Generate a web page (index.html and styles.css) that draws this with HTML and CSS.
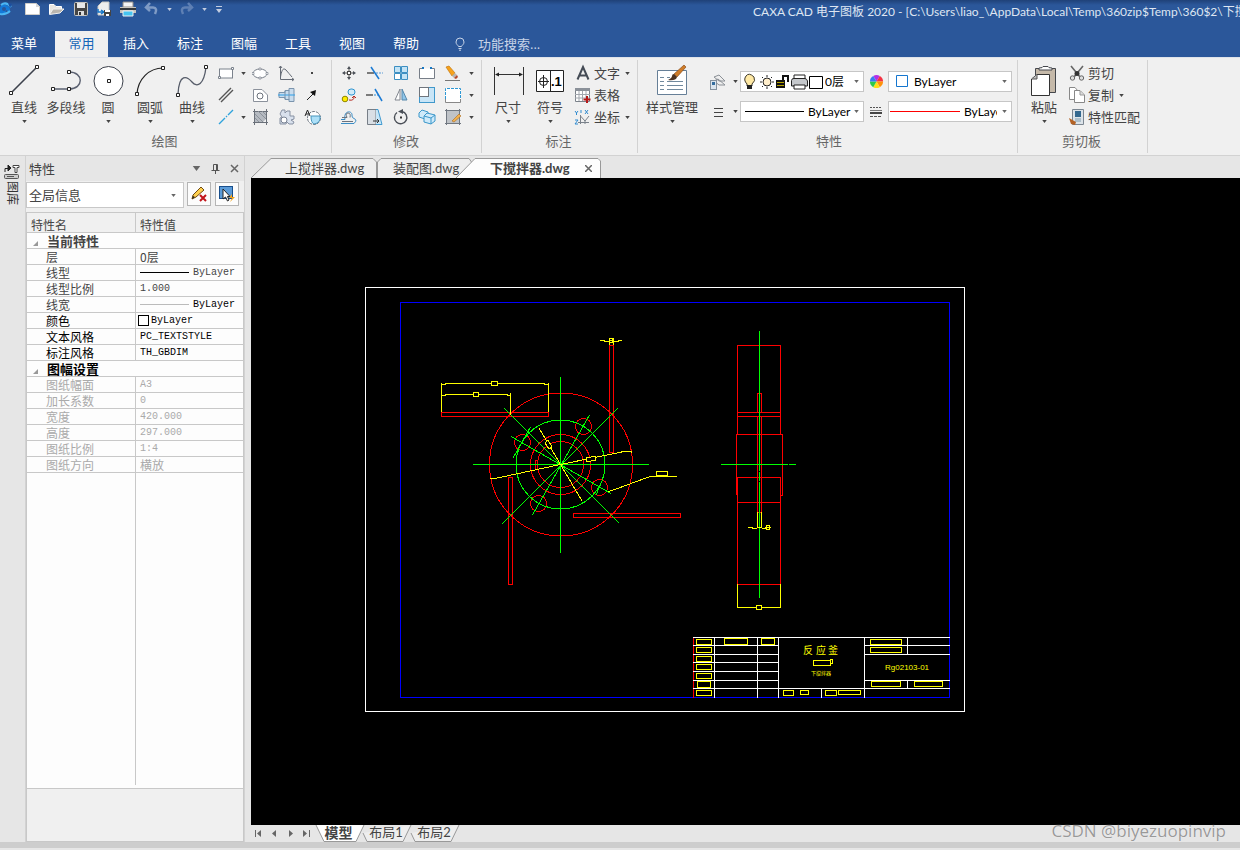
FILE: index.html
```html
<!DOCTYPE html>
<html lang="zh-CN">
<head>
<meta charset="utf-8">
<title>CAXA CAD 电子图板 2020</title>
<link rel="stylesheet" href="styles.css">
</head>
<body>
<svg class="defs" aria-hidden="true">
  <symbol id="caret" viewBox="0 0 6 4"><path d="M0 0H6L3 4Z"/></symbol>
</svg>

<header class="top">
  <div class="titlebar">
    <div class="quick">
      <svg class="logo" width="14" height="18" viewBox="0 0 14 18"><path d="M0 8Q1 3 6 5T10 12L6 10 5 14H0" fill="#1479d8"/><path d="M1 5Q6 1 11 7M0 14Q6 15 10 11" stroke="#4bb6f4" fill="none" stroke-width="2"/><path d="M8 3L12 4 10 8Z" fill="#1b4fa0"/><circle cx="4" cy="9" r="2" fill="#2b579a"/></svg>
      <button aria-label="新建"><svg width="18" height="14" viewBox="0 0 18 14"><path d="M2.500 1.500H13L16.500 4.500V12.500H2.500Z" fill="#fff" stroke="#d0cdc8"/><path d="M13 1V5H17" fill="#d8d8d8"/></svg></button>
      <button aria-label="打开"><svg width="18" height="14" viewBox="0 0 18 14"><path d="M1.500 12V2.500H6L8 4.500H13.500V7" fill="#e9e6e0" stroke="#fff"/><path d="M1.500 12.500L5 7H16L12 11Z" fill="#b9b5ae" stroke="#f1f1f1"/></svg></button>
      <button aria-label="保存"><svg width="16" height="14" viewBox="0 0 16 14"><rect x="1.500" y=".5" width="13" height="13" rx="1" fill="#454545" stroke="#c9c7c2"/><path d="M4 1H12V6H4Z" fill="#e8e8e8"/><path d="M5 9H11V13H5Z" fill="#ddd"/><path d="M6 10H8V13H6Z" fill="#333"/></svg></button>
      <button aria-label="另存为"><svg width="16" height="16" viewBox="0 0 16 16"><path d="M2 5L6 1H13V14H2Z" fill="#eee" stroke="#c9c7c2"/><path d="M2 8V11H7M5 9L8 11 5 13" stroke="#1676c8" fill="none" stroke-width="1.500"/><rect x="8" y="9" width="7" height="6" fill="#444"/><path d="M9 9H14V11H9ZM10 13H13V15H10Z" fill="#fff"/></svg></button>
      <button aria-label="打印"><svg width="18" height="16" viewBox="0 0 18 16"><path d="M4 1H14V6H4Z" fill="#f5f5f5" stroke="#8f8b86"/><path d="M1 6H17V12H1Z" fill="#c9c5bd"/><path d="M1 7H17V9H1Z" fill="#34383c"/><path d="M4 10H14V15H4Z" fill="#46c5f1" stroke="#eee"/></svg></button>
      <button class="dim" aria-label="撤销"><svg width="16" height="14" viewBox="0 0 16 14"><path d="M2 5.500H9Q14 6 11 12M6 1L2 5.500 6 9" fill="none" stroke="#7f9bc5" stroke-width="2.500"/></svg></button>
      <svg class="light" width="5" height="3"><use href="#caret"/></svg>
      <button class="dim" aria-label="重做"><svg width="16" height="14" viewBox="0 0 16 14"><path d="M13 5.500H6Q1 6 4 12M9 1L13 5.500 9 9" fill="none" stroke="#5f80b4" stroke-width="2.500"/></svg></button>
      <svg class="light" width="5" height="3"><use href="#caret"/></svg>
      <svg class="light more" width="6" height="9" viewBox="0 0 6 9"><path d="M0 1H6V2H0ZM0 4H6L3 8Z"/></svg>
    </div>
    <div class="title">CAXA CAD 电子图板 2020 - [C:\Users\liao_\AppData\Local\Temp\360zip$Temp\360$2\下搅拌器.dwg]</div>
  </div>
  <nav class="menu">
    <button class="file">菜单</button>
    <button class="on">常用</button>
    <button>插入</button>
    <button>标注</button>
    <button>图幅</button>
    <button>工具</button>
    <button>视图</button>
    <button>帮助</button>
    <label class="search">
      <svg width="12" height="14" viewBox="0 0 12 14"><path d="M4.500 9.500C4 8 2 7.500 2 5A4 4 0 0 1 10 5C10 7.500 8 8 7.500 9.500ZM4.500 11.500H7.500M5 13.200H7" fill="none" stroke="#c8d4e8"/></svg>
      <input type="text" placeholder="功能搜索..." aria-label="功能搜索">
    </label>
  </nav>
</header>

<section class="ribbon">
  <div class="group">
    <div class="tools">
      <button class="big"><svg class="ico" width="36" height="36" viewBox="0 0 36 36"><path d="M5 31L31 5" stroke="#3c414b" stroke-width="1.600"/><g class="node"><path d="M3.500 29.500h3v3h-3zM29.500 3.500h3v3h-3z"/></g></svg><span>直线</span><svg class="car"><use href="#caret"/></svg></button>
      <button class="big"><svg class="ico" width="36" height="36" viewBox="0 0 36 36"><path d="M5 27H21M21 10C36 10 36 27 21 27" fill="none" stroke="#5a6070" stroke-width="1.400"/><g class="node"><path d="M3.500 25.500h3v3h-3zM19.500 25.500h3v3h-3zM19.500 8.500h3v3h-3z"/></g></svg><span>多段线</span></button>
      <button class="big"><svg class="ico" width="36" height="36" viewBox="0 0 36 36"><circle cx="18.500" cy="19" r="14.500" fill="#fff" stroke="#3c414b"/><g class="node"><path d="M17.500 17.500h3v3h-3z"/></g></svg><span>圆</span><svg class="car"><use href="#caret"/></svg></button>
      <button class="big"><svg class="ico" width="36" height="36" viewBox="0 0 36 36"><path d="M5 32C6 17 17 6 31 6" fill="none" stroke="#222" stroke-width="1.200"/><g class="node"><path d="M3.500 30.500h3v3h-3zM29.500 4.500h3v3h-3z"/></g></svg><span>圆弧</span><svg class="car"><use href="#caret"/></svg></button>
      <button class="big"><svg class="ico" width="36" height="36" viewBox="0 0 36 36"><path d="M4 32C5 11 13 14 18 20S30 23 32 5" fill="none" stroke="#555b68" stroke-width="1.300"/><g class="node"><path d="M2.500 31.500h3v3h-3zM30.500 3.500h3v3h-3z"/></g></svg><span>曲线</span><svg class="car"><use href="#caret"/></svg></button>
      <div class="grid draw">
        <button aria-label="矩形"><svg class="sm" viewBox="0 0 18 18"><rect x="2.500" y="5" width="13" height="9" fill="#fff" stroke="#7b828c"/><path d="M1.500 12.500h2v2h-2zM14.500 3.500h2v2h-2z" fill="#fff" stroke="#7b828c"/></svg></button>
        <svg class="car"><use href="#caret"/></svg>
        <button aria-label="椭圆"><svg class="sm" viewBox="0 0 18 18"><ellipse cx="8" cy="9.500" rx="7" ry="4.500" fill="#fff" stroke="#7b828c"/><path d="M7 4h2v2H7zM7 13h2v2H7zM0 8.500h2v2H0zM14 8.500h2v2h-2z" fill="#fff" stroke="#7b828c" stroke-width=".7"/></svg></button>
        <button aria-label="公式曲线"><svg class="sm" viewBox="0 0 18 18"><path d="M2.500 2V15.500H16M1 4L2.500 2 4 4M14 14L16 15.500 14 17M2.500 13C4 4 6 4 8 6S12 11 14 13" fill="none" stroke="#666c76"/></svg></button>
        <button aria-label="点"><svg class="sm" viewBox="0 0 18 18"><rect x="7" y="8" width="2" height="2" fill="#444"/></svg></button>

        <button aria-label="平行线"><svg class="sm" viewBox="0 0 18 18"><path d="M2 14L14 2M4 16L16 4" stroke="#555" stroke-width="1.400"/></svg></button>
        <span></span>
        <button aria-label="轮廓"><svg class="sm" viewBox="0 0 18 18"><path d="M1.500 3.500H10L15.500 9V15.500H1.500Z" fill="#fff" stroke="#8b919b"/><circle cx="8" cy="10" r="3" fill="#fff" stroke="#6b717b"/></svg></button>
        <button aria-label="轴"><svg class="sm" viewBox="0 0 18 18"><path d="M1 6.500H7V4.500H11V2.500H16V15.500H11V13.500H7V11.500H1Z" fill="#c9dced" stroke="#7b94ad"/><path d="M0 9H17" stroke="#2d9fe8"/><path d="M7 5V13M11 4V14" stroke="#7b94ad"/></svg></button>
        <button aria-label="箭头"><svg class="sm" viewBox="0 0 18 18"><path d="M3 14L10 7" stroke="#222"/><path d="M12 4L11 10 6 6Z" fill="#111"/></svg></button>

        <button aria-label="中心线"><svg class="sm" viewBox="0 0 18 18"><path d="M2 16L8 10M9 9L10 8M11 7L16 2" stroke="#2fa3dc" stroke-width="1.400"/></svg></button>
        <svg class="car"><use href="#caret"/></svg>
        <button aria-label="剖面线"><svg class="sm" viewBox="0 0 18 18"><path d="M3 3H14V11L11 14H3Z" fill="#b5bac1"/><path d="M2.500 1V17M14.500 1V17M1 3.500H16M1 14.500H16" fill="none" stroke="#6a7079"/><path d="M3 6L11 14M3 10L7 14M6 3L14 11M10 3L14 7" stroke="#8c929a"/></svg></button>
        <button aria-label="齿轮"><svg class="sm" viewBox="0 0 18 18"><path d="M4 2H7V5L9 3H12V8H16V11L13 12 16 14 15 16H11L9 14 8 16H2V10L4 9 2 6Z" fill="#d9e1ed" stroke="#8791a3"/><circle cx="6" cy="12" r="3" fill="#fff" stroke="#7b8495"/></svg></button>
        <button aria-label="局部放大"><svg class="sm" viewBox="0 0 18 18"><circle cx="10" cy="10" r="6.500" fill="#fff" stroke="#68717c" stroke-dasharray="3 1"/><path d="M7 8H16Q17 15 10 16 7 15 7 8Z" fill="#ade0f8" stroke="#4996bd"/><path d="M1 8L3.500 2 6 8M2 6H5" fill="none" stroke="#222"/></svg></button>
      </div>
    </div>
    <div class="name">绘图</div>
  </div>

  <div class="group modify">
    <div class="tools">
      <div class="grid mod">
        <button aria-label="平移"><svg class="sm" viewBox="0 0 18 18"><path d="M9 4V7M9 11V14M4 9H7M11 9H14" stroke="#555"/><path d="M9 2L11 5H7ZM9 16L7 13H11ZM2 9L5 7V11ZM16 9L13 7V11Z" fill="#4b5058"/><rect x="7.500" y="7.500" width="3" height="3" fill="#fff" stroke="#444"/></svg></button>
        <button aria-label="裁剪"><svg class="sm" viewBox="0 0 18 18"><path d="M1 9H8" stroke="#555" stroke-width="1.500"/><path d="M10 9H17" stroke="#5b9bd5" stroke-dasharray="2 1"/><path d="M5 3L13 15" stroke="#1a7ad4" stroke-width="1.500"/></svg></button>
        <button aria-label="阵列"><svg class="sm" viewBox="0 0 18 18"><g fill="#c3e3f5" stroke="#3c8fc2"><path d="M2.500 2.500h6v6h-6zM9.500 2.500h6v6h-6zM9.500 9.500h6v6h-6z"/><path d="M2.500 9.500h6v6h-6z" fill="#fff"/></g></svg></button>
        <button aria-label="打断"><svg class="sm" viewBox="0 0 18 18"><path d="M5 4.500H1.500V14.500H16.500V4.500H13" fill="#fff" stroke="#777e88"/><path d="M4 3h2v2H4zM12 3h2v2h-2z" fill="#1778c5"/></svg></button>
        <button aria-label="删除"><svg class="sm" viewBox="0 0 18 18"><path d="M2 3L5 2 11 9 8 12Z" fill="#f7a21b" stroke="#c47811" stroke-width=".7"/><path d="M8 12L11 9 13 11 10 14Z" fill="#b9b5b0"/><path d="M10 14L13 11 14 13 12 15Z" fill="#b5482a"/><path d="M1 16.500H16" stroke="#777"/></svg></button>
        <svg class="car"><use href="#caret"/></svg>

        <button aria-label="复制"><svg class="sm" viewBox="0 0 18 18"><circle cx="5" cy="13" r="2.800" fill="#ffec00" stroke="#8f8500"/><rect x="8" y="3" width="7" height="6" rx="3" fill="#d1eaf8" stroke="#2e94cf"/><path d="M9 14Q14 15 14 11M12 12L14 10 16 12" fill="none" stroke="#b52a22"/></svg></button>
        <button aria-label="延伸"><svg class="sm" viewBox="0 0 18 18"><path d="M0 9H7" stroke="#555" stroke-width="1.500"/><path d="M8 9H13" stroke="#2c8ed5" stroke-dasharray="2 1"/><path d="M9 3L16 15" stroke="#1a7ad4" stroke-width="1.500"/></svg></button>
        <button aria-label="镜像"><svg class="sm" viewBox="0 0 18 18"><path d="M8 3V14H3Z" fill="#fff" stroke="#82878f"/><path d="M10 3V14H15Z" fill="#8fc6ea" stroke="#5687aa"/></svg></button>
        <button aria-label="缩放"><svg class="sm" viewBox="0 0 18 18"><rect x="1.500" y="1.500" width="15" height="15" fill="#c8e5f7" stroke="#4098cb"/><rect x="1.500" y="1.500" width="9" height="9" fill="#fff" stroke="#6f757d"/></svg></button>
        <button aria-label="拉伸"><svg class="sm" viewBox="0 0 18 18"><path d="M1.500 2.500H16.500V16.500H1.500Z" fill="#fff" stroke="#888"/><path d="M1.500 13V2.500H16.500V13" fill="none" stroke="#fff"/><path d="M1.500 13V2.500H16.500V13" fill="none" stroke="#2e98d4" stroke-dasharray="3 1"/></svg></button>
        <svg class="car"><use href="#caret"/></svg>

        <button aria-label="等距线"><svg class="sm" viewBox="0 0 18 18"><path d="M1 11.500H5C3 2 13 2 12 8 12 11 16 10 16 13T14 15.500H1" fill="none" stroke="#3a8dc6"/><path d="M2 13.500H13M2 9.500H7Q5 5 8 5T10 9.500" fill="none" stroke="#6c737d"/></svg></button>
        <button aria-label="拉长"><svg class="sm" viewBox="0 0 18 18"><path d="M1.500 1.500H10V16.500H1.500Z" fill="#d9dfe5" stroke="#777e87"/><path d="M10 1.500H12L16 16.500H10" fill="#c8e6f7" stroke="#429bd0"/><path d="M7 13H13M11 11L13 13 11 15" stroke="#333" fill="none"/></svg></button>
        <button aria-label="旋转"><svg class="sm" viewBox="0 0 18 18"><path d="M5 4.500A6.200 6.200 0 1 0 10 3.500" fill="none" stroke="#4a4f57" stroke-width="1.400"/><path d="M6 3.500L11 1V6Z" fill="#4a4f57"/><rect x="8" y="8.500" width="2" height="2" fill="#333"/></svg></button>
        <button aria-label="三维"><svg class="sm" viewBox="0 0 18 18"><g fill="#cfeafa" stroke="#3b97ca"><path d="M1 5L4 2 10 4V9L7 11 1 9Z"/><path d="M6 8L9 5 17 7V13L13 16 6 14Z"/><path d="M6 8L13 10V16M13 10L17 7" fill="none"/></g></svg></button>
        <button aria-label="编辑填充"><svg class="sm" viewBox="0 0 18 18"><path d="M3 3H15V15H3Z" fill="#bfc3c8"/><path d="M2.500 1V17M15.500 1V17M1 2.500H17M1 15.500H17" stroke="#707780"/><path d="M8 13L15 6 17 8 10 14Z" fill="#f2b24f" stroke="#a96a20" stroke-width=".6"/></svg></button>
        <svg class="car"><use href="#caret"/></svg>
      </div>
    </div>
    <div class="name">修改</div>
  </div>

  <div class="group note">
    <div class="tools">
      <button class="big"><svg class="ico" width="36" height="36" viewBox="0 0 36 36"><path d="M4.500 5V33M33.500 5V33M6 12.500H32" stroke="#333"/><path d="M5 12.500L9 10.500V14.500ZM33 12.500L29 10.500V14.500Z" fill="#222"/></svg><span>尺寸</span><svg class="car"><use href="#caret"/></svg></button>
      <button class="big"><svg class="ico" width="36" height="36" viewBox="0 0 36 36"><path d="M4.500 8.500H31.500V29.500H4.500ZM18.500 8.500V29.500" fill="#fff" stroke="#222"/><circle cx="11.500" cy="19.500" r="4" fill="none" stroke="#222"/><path d="M6 19.500H17M11.500 13V26" stroke="#222"/><text x="19" y="24" font-size="13" font-weight="700" font-family="Liberation Sans">.1</text></svg><span>符号</span><svg class="car"><use href="#caret"/></svg></button>
      <div class="stack">
        <button class="row"><svg class="sm" viewBox="0 0 18 18"><path d="M3.500 15.500L9 3L14.500 15.500M5.500 11.500H12.500" fill="none" stroke="#444b55" stroke-width="2"/></svg><span>文字</span><svg class="car"><use href="#caret"/></svg></button>
        <button class="row"><svg class="sm" viewBox="0 0 18 18"><path d="M1.500 2.500H15.500V15.500H1.500Z" fill="#fff" stroke="#7c828a"/><path d="M1 2H16V5H1Z" fill="#8b9199"/><path d="M1 8.500H16M1 12H16M5 5V15M8.500 5V15M12 5V15" stroke="#a2a7ae"/><path d="M13 10V17M9.500 13.500H16.500" stroke="#b51818" stroke-width="2"/></svg><span>表格</span></button>
        <button class="row"><svg class="sm" viewBox="0 0 18 18"><path d="M6.500 7V16M4 14.500H15M6.500 8L11 13L15 8M11 13V16" fill="none" stroke="#7b828b"/><path d="M1 3L2.500 5 4 3M2.500 5V7M11 2L14 6M14 2L11 6M1 12H4L1 16H4M7 2V5" stroke="#2f8bd0" fill="none"/></svg><span>坐标</span><svg class="car"><use href="#caret"/></svg></button>
      </div>
    </div>
    <div class="name">标注</div>
  </div>

  <div class="group props">
    <div class="tools">
      <button class="big wide"><svg class="ico" width="36" height="36" viewBox="0 0 36 36"><path d="M3.500 8.500H32.500V32.500H3.500Z" fill="#fff" stroke="#667f97"/><path d="M6 15.500H10M6 19.500H10M6 23.500H10M6 27.500H10M13 15.500H16M13 19.500H29M13 23.500H29M13 27.500H29" stroke="#71899d"/><path d="M30 3L32 5 23 15 20 12Z" fill="#cf7c28" stroke="#7c4210" stroke-width=".6"/><path d="M20 12L23 15Q22 19 14 18 18 16 18 14T20 12" fill="#4c321f"/></svg><span>样式管理</span><svg class="car"><use href="#caret"/></svg></button>
      <div class="selectors">
        <button class="pick" aria-label="图层"><svg class="sm" viewBox="0 0 18 18"><path d="M5 4L10 2 16 8 10 8ZM5 8L9 6 16 12 10 12Z" fill="#eee" stroke="#8b9096"/><rect x="1.500" y="7.500" width="6" height="9" fill="#dbe5ee" stroke="#85919d"/><path d="M3 9h3v3H3z" fill="#346d9e"/></svg><svg class="car"><use href="#caret"/></svg></button>
        <div class="combo">
          <svg width="84" height="19" viewBox="0 0 84 19">
            <path d="M6 12Q2 8 5 4T13 5Q15 9 11 12V14H6Z" fill="#ffe9a5" stroke="#3e392b"/><path d="M6 13h5v4H6z" fill="#222"/>
            <circle cx="26" cy="10" r="4" fill="#ffeecb" stroke="#222"/><path d="M26 3V5M26 15V17M19 10H21M31 10H33M21 5L22 6M30 14L31 15M31 5L30 6M22 14L21 15" stroke="#222"/>
            <path d="M35 8H44V16H35Z" fill="#111"/><path d="M36 10.500H43M36 13.500H43" stroke="#b6a300"/><path d="M42 8V4H47V10" fill="none" stroke="#111" stroke-width="2"/>
            <path d="M53 3H64V8H53Z" fill="#fff" stroke="#222"/><path d="M50.500 8.500Q51 6 53 6.500H64Q66 7 66.500 9V14H50.500Z" fill="#c5c8cc" stroke="#222"/><path d="M53 13H64V17H53Z" fill="#fff" stroke="#222"/>
            <path d="M68.500 4.500h13v12h-13z" fill="#fff" stroke="#000"/></svg>
          <select aria-label="当前层"><option>0层</option></select>
          <svg class="car"><use href="#caret"/></svg>
        </div>
        <svg class="mid" width="15" height="15" viewBox="-8 -8 16 16"><path d="M0 0L-3.500-6A7 7 0 0 1 3.500-6Z" fill="#b32fe6"/><path d="M0 0L3.500-6A7 7 0 0 1 7 0Z" fill="#f43243"/><path d="M0 0H7A7 7 0 0 1 3.500 6Z" fill="#ff920a"/><path d="M0 0L3.500 6A7 7 0 0 1-3.500 6Z" fill="#ffdf15"/><path d="M0 0L-3.500 6A7 7 0 0 1-7 0Z" fill="#2cc94c"/><path d="M0 0H-7A7 7 0 0 1-3.500-6Z" fill="#367cf0"/></svg>
        <div class="combo">
          <svg width="25" height="19" viewBox="0 0 25 19"><path d="M7.500 3.500h11v11h-11z" fill="#fff" stroke="#1476cf"/></svg>
          <select aria-label="颜色"><option>ByLayer</option></select>
          <svg class="car"><use href="#caret"/></svg>
        </div>
        <button class="pick" aria-label="线宽"><svg class="sm" viewBox="0 0 18 18"><path d="M5 5.500H14M5 9.500H14M5 13.500H14" stroke="#444"/></svg><svg class="car"><use href="#caret"/></svg></button>
        <div class="combo">
          <svg width="67" height="19" viewBox="0 0 67 19"><path d="M4 9.500H63" stroke="#000"/></svg>
          <select aria-label="线宽选择"><option>ByLayer</option></select>
          <svg class="car"><use href="#caret"/></svg>
        </div>
        <svg class="mid" width="14" height="14" viewBox="0 0 14 14"><path d="M1 2.500H13" stroke="#555" stroke-dasharray="2 1"/><path d="M1 5.500H13" stroke="#777"/><path d="M1 8H13" stroke="#444" stroke-width="2"/><path d="M1 11.500H13" stroke="#555" stroke-dasharray="3 1"/></svg>
        <div class="combo">
          <svg width="75" height="19" viewBox="0 0 75 19"><path d="M1 9.500H71" stroke="#f00"/></svg>
          <select class="tight" aria-label="线型选择"><option>ByLayer</option></select>
          <svg class="car"><use href="#caret"/></svg>
        </div>
      </div>
    </div>
    <div class="name">特性</div>
  </div>

  <div class="group clip">
    <div class="tools">
      <button class="big"><svg class="ico" width="36" height="36" viewBox="0 0 36 36"><path d="M9.500 6.500H29.500V30.500H9.500Z" fill="#c5b9a9" stroke="#44474c"/><path d="M13 8V6Q17 6 17 4.500H22Q22 6 26 6V8Z" fill="#fff" stroke="#44474c"/><path d="M11 12.500H23.500V33.500H5.500V17Z" fill="#fff" stroke="#333"/><path d="M11 12.500V17H6" fill="#bbb" stroke="#555"/></svg><span>粘贴</span><svg class="car"><use href="#caret"/></svg></button>
      <div class="stack">
        <button class="row"><svg class="sm" viewBox="0 0 18 18"><path d="M3 2L12 13M15 2L6 13" stroke="#666" stroke-width="1.600"/><circle cx="4.500" cy="14" r="2.200" fill="#ddd" stroke="#666"/><circle cx="13.500" cy="14" r="2.200" fill="#ddd" stroke="#666"/><circle cx="9" cy="9.500" r="2.500" fill="#333"/></svg><span>剪切</span></button>
        <button class="row"><svg class="sm" viewBox="0 0 18 18"><path d="M1.500 1.500H7L10 5V13.500H1.500Z" fill="#fff" stroke="#888"/><path d="M6.500 4.500H12L16.500 9V16.500H6.500Z" fill="#fff" stroke="#888"/><path d="M12 5V9H16" fill="#ddd" stroke="#999"/></svg><span>复制</span><svg class="car"><use href="#caret"/></svg></button>
        <button class="row"><svg class="sm" viewBox="0 0 18 18"><path d="M4.500 1.500H15.500V16.500H4.500Z" fill="#dce3e9" stroke="#7b8691"/><path d="M7 3h6v6H7z" fill="#33688f"/><path d="M7 11H13M7 13H13" stroke="#7f9cae"/><path d="M1 10L8 14 7 17 3 16Z" fill="#b26226"/></svg><span>特性匹配</span></button>
      </div>
    </div>
    <div class="name">剪切板</div>
  </div>
</section>

<main class="work">
  <aside class="rail">
    <button>
      <svg width="16" height="17" viewBox="0 0 16 17"><path d="M1 5.500V9M1 5.500H5M4 2L7 5 4 8Z" stroke="#222" fill="#222"/><path d="M9 2.500H15V4.500H13V9.500H11V4.500H9Z" fill="#fff" stroke="#444"/><rect x=".5" y="11.500" width="14" height="4" rx="1" fill="#ccc" stroke="#555"/><path d="M3 13.500H10" stroke="#555"/></svg>
      <span>图库</span>
    </button>
  </aside>

  <section class="panel">
    <div class="panel-title">
      <h2>特性</h2>
      <button aria-label="菜单"><svg width="9" height="5"><use href="#caret"/></svg></button>
      <button aria-label="固定"><svg width="9" height="10" viewBox="0 0 9 10"><path d="M2.500 6V.5H6.500V6M.5 6.500H8.500M4.500 7V10M5.500 1V6" fill="none" stroke="#555"/></svg></button>
      <button aria-label="关闭"><svg width="9" height="9" viewBox="0 0 9 9"><path d="M1 1L8 8M8 1L1 8" stroke="#666" stroke-width="1.500"/></svg></button>
    </div>
    <div class="panel-tools">
      <div class="scope">
        <select aria-label="信息范围"><option>全局信息</option></select>
        <svg class="car"><use href="#caret"/></svg>
      </div>
      <button class="tool" aria-label="清除"><svg width="18" height="18" viewBox="0 0 18 18"><path d="M2 14L3 10 11 2 14 5 6 12Z" fill="#ffd04e" stroke="#6d4a12"/><path d="M2 14L3 11 5 12Z" fill="#222"/><path d="M10 10L16 16M16 10L10 16" stroke="#c2151b" stroke-width="2"/></svg></button>
      <button class="tool" aria-label="快速选择"><svg width="18" height="18" viewBox="0 0 18 18"><rect x="1.500" y="1.500" width="13" height="12" fill="#5b9bd8" stroke="#194f8c"/><path d="M5 4V14L7.500 12 9.500 16 11 15 9.500 11.500H12Z" fill="#fff" stroke="#222"/><path d="M14 9L11 13H14L12 17 17 12H14Z" fill="#f4a51e"/></svg></button>
    </div>
    <div class="sheet">
      <table>
        <colgroup><col class="c1"><col></colgroup>
        <thead><tr><th>特性名</th><th>特性值</th></tr></thead>
        <tbody>
          <tr class="cat grey"><th colspan="2"><svg width="5" height="5" viewBox="0 0 5 5"><path d="M5 0V5H0Z"/></svg>当前特性</th></tr>
          <tr class="grey"><td>层</td><td class="han">0层</td></tr>
          <tr class="grey"><td>线型</td><td><span class="line"><i></i>ByLayer</span></td></tr>
          <tr class="grey"><td>线型比例</td><td>1.000</td></tr>
          <tr><td class="soft">线宽</td><td><span class="line thin"><i></i>ByLayer</span></td></tr>
          <tr><td>颜色</td><td><span class="swatch"><i></i>ByLayer</span></td></tr>
          <tr><td>文本风格</td><td>PC_TEXTSTYLE</td></tr>
          <tr><td>标注风格</td><td>TH_GBDIM</td></tr>
          <tr class="cat"><th colspan="2"><svg width="5" height="5" viewBox="0 0 5 5"><path d="M5 0V5H0Z"/></svg>图幅设置</th></tr>
          <tr class="off"><td>图纸幅面</td><td>A3</td></tr>
          <tr class="off"><td>加长系数</td><td>0</td></tr>
          <tr class="off"><td>宽度</td><td>420.000</td></tr>
          <tr class="off"><td>高度</td><td>297.000</td></tr>
          <tr class="off"><td>图纸比例</td><td>1:4</td></tr>
          <tr class="off"><td>图纸方向</td><td class="han">横放</td></tr>
        </tbody>
      </table>
      <div class="rest"></div>
    </div>
    <div class="hint"></div>
  </section>

  <section class="doc">
    <div class="doc-tabs">
      <button class="t1"><svg class="shape" width="127" height="20" viewBox="0 0 127 20"><path d="M0 20L20 .5H122L125.500 4V20" /></svg><span>上搅拌器.dwg</span></button>
      <button class="t2"><svg class="shape" width="95" height="20" viewBox="0 0 95 20"><path d="M.5 20V4L4 .5H92L94.500 4V20"/></svg><span>装配图.dwg</span></button>
      <button class="t3"><svg class="shape" width="145" height="20" viewBox="0 0 145 20"><path d="M0 20L19 .5H142L144.500 3V20"/></svg><span>下搅拌器.dwg</span><svg class="close" width="7" height="7" viewBox="0 0 7 7"><path d="M0 0L7 7M7 0L0 7" stroke="#666" stroke-width="1.500"/></svg></button>
    </div>
    <div class="canvas">
      <svg width="989" height="647" viewBox="251 178 989 647" fill="none" shape-rendering="crispEdges">
        <rect x="365.500" y="287.500" width="599" height="424" stroke="#fff"/>
        <path stroke="#00f" d="M400.500 302.500H949.500V697.500H400.500Z"/>
        <g stroke="#f00">
          <circle cx="561" cy="464.500" r="71.500"/>
          <circle cx="560.500" cy="464.500" r="30"/>
          <circle cx="560.500" cy="464.500" r="23"/>
          <path d="M538 460.500H535.500V469.500H538"/>
          <circle cx="583.500" cy="426.500" r="8"/>
          <circle cx="522.500" cy="442.500" r="8"/>
          <circle cx="599.500" cy="487.500" r="8"/>
          <circle cx="538.500" cy="503.500" r="8"/>
          <path d="M441.500 412.500h107v4h-107zM609.500 345.500h4v107h-4zM508.500 477.500h4v107h-4zM573.500 513.500h107v4h-107z"/>
        </g>
        <g stroke="#0f0">
          <circle cx="560.500" cy="464.500" r="44.500"/>
          <path d="M560.500 377V553M473 464.500H649M504 408L619 523M618 408L502 524M589.500 415L532.500 515M511 436.500L611 493.500M530.500 427L513 458M602 481L596 495"/>
        </g>
        <g stroke="#ff0">
          <path d="M441.500 412V383M548.500 383V412M442 384.500H445V383.500H544V384.500H548M442 395.500H445V394.500H507V395.500H510M510.500 393V415"/>
          <path d="M491.500 381.500h6v4h-6zM473.500 392.500h5v4h-5z" fill="#000"/>
          <path d="M600 340.500H604V341.500H609M622 340.500H618V341.500H614M609.500 338V345M613.500 338V345M609.500 338.500H612.500V342.500H609.500M610 340.500H613"/>
          <path d="M539 428L560.500 464.500 582 501M490 478.500H495L560.500 464.500 624 451.500H631V453M608 491.500L612 490.500 650 476.500H677M656.500 471.500h11v4h-11z"/>
          <path d="M586.500 457.500L595 456.500V460.500L586.500 461.500ZM548 440L552 447 549 449 545 443Z" fill="#000"/>
        </g>
        <g stroke="#f00">
          <path d="M737.500 434.500V345.500H780.500V434.500M737 412.500H781M737 416.500H781M736.500 495V434.500H782.500V495.500H780.500M737.500 584.500V477.500H780.500V584.500ZM737 502.500H781M757.500 412V393.500H761.500V412M757.500 416V512.500H761.500V416"/>
        </g>
        <path stroke="#0f0" d="M759.500 331V471M759.500 472V481M759.500 482V598M721 464.500H788M789 464.500H796"/>
        <path stroke="#ff0" d="M737.500 584V607.500H780.500V584M757.500 512V528M761.500 512V528M748 527.500H752V528.500H757M758 527.500H761M762 528.500H765V527.500H771M766.500 525.500h3v4h-3z"/>
        <path stroke="#ff0" fill="#000" d="M756.500 605.500h5v4h-5z"/>
        <path stroke="#f00" d="M693.500 637V698"/>
        <path stroke="#fff" d="M693 637.500H950M693 688.500H950M714.500 637V698M757.500 637V698M778.500 637V698M864.500 637V698M821.500 688V698M907.500 637V654M907.500 680V688M693 645.500H778M693 654.500H778M693 662.500H778M693 671.500H778M693 680.500H778M864 645.500H950M864 654.500H950M864 680.500H950"/>
        <path stroke="#ff0" d="M696.500 639.500h15v5h-15zM696.500 647.500h15v5h-15zM696.500 656.500h15v5h-15zM696.500 664.500h15v5h-15zM696.500 673.500h15v5h-15zM697.500 681.500h13v6h-13zM696.500 690.500h15v5h-15zM724.500 638.500h23v6h-23zM761.500 638.500h13v6h-13zM870.500 639.500h31v5h-31zM870.500 647.500h31v5h-31zM871.500 681.500h29v5h-29zM914.500 681.500h28v5h-28zM783.500 690.500h10v5h-10zM800.500 690.500h8v4h-8zM825.500 690.500h11v5h-11zM838.500 690.500h22v4h-22zM813.500 660.500h17v5h-17zM830.500 659.500h2v4h-2z"/>
        <g class="cad">
          <text x="803 816 828" y="654" font-size="10">反应釜</text>
          <text x="811" y="675" font-size="5">下搅拌器</text>
          <text x="885" y="670" font-size="8">Rg02103-01</text>
        </g>
      </svg>
    </div>
    <div class="sheets">
      <button class="nav" aria-label="首页"><svg width="8" height="7" viewBox="0 0 8 7"><path d="M0 0H1V7H0ZM6 0V7L2 3.500Z"/></svg></button>
      <button class="nav" aria-label="上一页"><svg width="8" height="7" viewBox="0 0 8 7"><path d="M5 0V7L1 3.500Z"/></svg></button>
      <button class="nav" aria-label="下一页"><svg width="8" height="7" viewBox="0 0 8 7"><path d="M2 0V7L6 3.500Z"/></svg></button>
      <button class="nav" aria-label="末页"><svg width="8" height="7" viewBox="0 0 8 7"><path d="M0 0V7L4 3.500ZM6 0H7V7H6Z"/></svg></button>
      <button class="sheet-tab on"><svg class="shape" width="52" height="17" viewBox="0 0 52 17"><path d="M1 0L9 16.500H41L49 0"/></svg>模型</button>
      <button class="sheet-tab"><svg class="shape" width="52" height="17" viewBox="0 0 52 17"><path d="M1 8L5 16.500H41L49 0"/></svg>布局1</button>
      <button class="sheet-tab"><svg class="shape" width="52" height="17" viewBox="0 0 52 17"><path d="M1 8L5 16.500H41L49 0"/></svg>布局2</button>
    </div>
    <div class="credit">CSDN @biyezuopinvip</div>
  </section>
</main>
<footer class="foot"></footer>
</body>
</html>
```
FILE: styles.css
```css
* { box-sizing: border-box; }

body {
  margin: 0;
  height: 100vh;
  display: flex;
  flex-direction: column;
  overflow: hidden;
  background: #e6e6e6;
  color: #444;
  font: 13px/18px "Open Sans", "Noto Sans CJK SC", sans-serif;
}

button, select, input {
  margin: 0;
  padding: 0;
  border: 0;
  background: none;
  color: inherit;
  font: inherit;
}

svg { display: block; flex: none; }
.defs { width: 0; height: 0; position: absolute; }
.car { width: 5px; height: 3px; fill: #444; }

/* title bar and menu */
.top { background: linear-gradient(#1f4178, #2b579a 5px); color: #fff; }
.titlebar { display: flex; height: 31px; }
.quick { display: flex; flex: 0 0 753px; height: 18px; gap: 7px; align-items: center; }
.quick .logo { margin-right: 2px; }
.light { fill: #c3cde0; }
.more { margin-left: 2px; }
.title { flex: 1; overflow: hidden; white-space: nowrap; padding-top: 3px; font-family: Lato, "Noto Sans CJK SC", sans-serif; font-size: 12px; color: #dfe6f2; }

.menu { display: flex; height: 26px; }
.menu button { width: 54px; padding-bottom: 3px; }
.menu .file { width: 48px; margin-right: 7px; }
.menu .on { width: 53px; margin-right: 1px; height: 27px; background: #f0f0f0; color: #1565b8; }
.search { display: flex; align-items: center; gap: 12px; padding-left: 21px; padding-bottom: 1px; color: #c8d4e8; }
.search input { width: 160px; outline: 0; }
.search input::placeholder { color: #c8d4e8; opacity: 1; }

/* ribbon */
.ribbon {
  display: flex;
  flex: none;
  padding: 2px 0;
  border-top: 1px solid #dfe3ea;
  border-bottom: 1px solid #d2d2d2;
  background: #f0f0f0;
}
.group { flex: none; padding: 2px 5px 0 3px; border-right: 1px solid #d2d2d2; }
.group.modify { padding: 2px 5px 0 4px; }
.group.note { padding: 2px 7px 0 5px; }
.group.props { padding: 2px 5px 0 8px; }
.group.clip { padding: 2px 7px 0 5px; }
.tools { display: flex; height: 70px; }
.name { height: 21px; line-height: 18px; text-align: center; color: #666; }
.big { display: flex; flex-direction: column; align-items: center; width: 42px; height: 64px; white-space: nowrap; }
.big.wide { width: 52px; }
.big .car { margin-top: 4px; }
.node { fill: #fff; stroke: #222; stroke-width: 1; }
.grid { display: grid; grid-auto-rows: 22px; align-items: center; justify-items: center; }
.draw { grid-template-columns: 24px 10px 26px 26px 26px; padding-left: 1px; }
.mod { grid-template-columns: repeat(5, 26px) 10px; }
.sm { width: 18px; height: 18px; }
.stack { display: grid; grid-auto-rows: 22px; padding-left: 3px; }
.row { display: flex; align-items: center; gap: 2px; white-space: nowrap; line-height: 16px; }
.row .car { margin-left: 3px; }
.selectors { display: grid; grid-template-columns: 31px 124px 24px 124px; grid-auto-rows: 21px; row-gap: 9px; padding: 9px 0 0 11px; align-items: center; }
.pick { display: flex; align-items: center; gap: 6px; }
.mid { justify-self: center; }
.combo { display: flex; align-items: center; height: 21px; border: 1px solid #c6c6c6; background: #fff; color: #000; padding-right: 4px; }
.combo select, .scope select { flex: 1; min-width: 0; appearance: none; outline: 0; white-space: nowrap; overflow: hidden; }
.combo select { font-family: Lato, "Noto Sans CJK SC", sans-serif; font-size: 12px; }
.combo .tight { margin-right: 5px; }
.combo .car, .scope .car { fill: #666; }

/* work area */
.work { display: flex; flex: 1; min-height: 0; }
.rail { width: 25px; padding: 7px 0 0 4px; }
.rail span { display: block; padding-top: 1px; writing-mode: vertical-rl; text-orientation: sideways; font-size: 12px; line-height: 16px; color: #333; }

.panel { display: flex; flex-direction: column; width: 220px; border: solid #d2d2d2; border-width: 0 1px; background: #f0f0f0; }
.panel-title { display: flex; align-items: center; gap: 10px; height: 25px; padding: 0 5px 0 3px; background: #e6e6e6; }
.panel-title h2 { flex: 1; margin: 0; font: inherit; line-height: 16px; }
.panel-title svg { fill: #666; }
.panel-tools { display: flex; gap: 3px; height: 31px; padding-top: 1px; }
.scope { display: flex; align-items: center; width: 158px; height: 26px; padding: 0 7px 0 2px; border: 1px solid #c8c8c8; background: #fff; }
.tool { display: flex; align-items: center; justify-content: center; width: 24px; height: 24px; border: 1px solid #b5b5b5; background: #fcfcfc; }
.tool + .tool { margin-left: 1px; }

.sheet { display: flex; flex-direction: column; flex: 1; border: 1px solid #c8c8c8; border-bottom: 0; background: #fdfdfd; }
.sheet table { width: 100%; border-collapse: separate; border-spacing: 0; table-layout: fixed; font: 12px/15px "Noto Sans CJK SC", sans-serif; color: #000; }
.c1 { width: 109px; }
thead th { height: 20px; padding: 3px 4px 0; border: solid #c8c8c8; border-width: 0 1px 1px 0; background: #f0f0f0; color: #444; font-weight: 400; text-align: left; }
thead th + th { border-right: 0; }
tbody tr { height: 16px; }
tbody td, tbody th { height: 16px; padding: 0 0 0 4px; border-bottom: 1px solid #c8c8c8; white-space: nowrap; line-height: 15px; }
tbody td:first-child { padding-left: 19px; border-right: 1px solid #c8c8c8; }
tbody td + td { font-family: "Liberation Mono", monospace; font-size: 10px; }
tbody td.han { font-family: "Noto Sans CJK SC", sans-serif; font-size: 12px; }
.cat th { text-align: left; font-size: 13px; padding-left: 6px; }
.cat svg { display: inline-block; margin-right: 9px; fill: #999; }
.grey, .soft { color: #444; }
.off { color: #aaa; }
.line { display: flex; align-items: center; gap: 4px; }
.line i { width: 49px; height: 1px; background: #000; }
.line.thin i { background: #bbb; }
.swatch { display: flex; align-items: center; gap: 2px; margin-left: -2px; }
.swatch i { width: 11px; height: 11px; border: 1px solid #000; background: #fff; }
.rest { flex: 1; width: 109px; border-right: 1px solid #c8c8c8; margin-bottom: 3px; }
.hint { height: 54px; border: 1px solid #c8c8c8; }

/* document area */
.doc { position: relative; display: flex; flex-direction: column; flex: 1; min-width: 0; margin-left: 6px; }
.doc-tabs { display: flex; align-items: flex-end; height: 22px; font-family: Lato, "Noto Sans CJK SC", sans-serif; }
.doc-tabs button { position: relative; display: flex; align-items: center; height: 20px; white-space: nowrap; }
.doc-tabs span { position: relative; }
.shape { position: absolute; left: 0; top: 0; fill: #eee; stroke: #999; }
.t1 { width: 126px; padding-left: 34px; }
.t2 { width: 79px; padding-left: 16px; }
.t3 { width: 145px; padding-left: 34px; gap: 15px; font-weight: 700; }
.t3 .shape { fill: #fdfdfd; }
.close { position: relative; }
.canvas { flex: 1; min-height: 0; overflow: hidden; background: #000; }
.cad { fill: #ff0; font-family: "Liberation Sans", "Noto Sans CJK SC", sans-serif; }
.sheets { display: flex; height: 17px; font-family: Lato, "Noto Sans CJK SC", sans-serif; }
.nav { display: flex; align-items: center; width: 16px; padding-left: 4px; fill: #666; }
.sheet-tab { position: relative; z-index: 0; width: 48px; line-height: 15px; padding: 0 0 2px; white-space: nowrap; }
.sheet-tab .shape { z-index: -1; fill: #eee; }
.sheet-tab.on { z-index: 1; width: 47px; font-weight: 700; font-size: 14px; }
.sheet-tab.on .shape { fill: #fff; }
.credit { position: absolute; right: 14px; bottom: 0; font: 17px/22px "Open Sans", sans-serif; color: #999; text-shadow: 0 0 1px #fff; }
.foot { flex: none; height: 8px; background: #cdcdcd; border-bottom: 2px solid #e6e6e6; }
```
